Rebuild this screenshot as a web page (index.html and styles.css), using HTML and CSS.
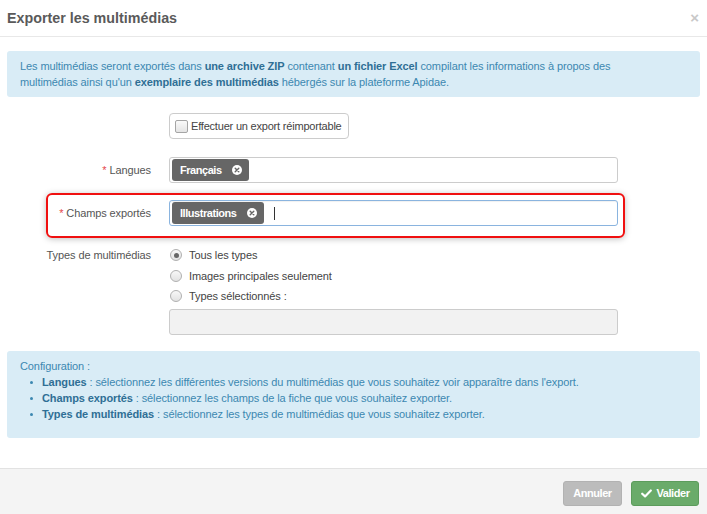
FILE: index.html
```html
<!DOCTYPE html>
<html lang="fr">
<head>
<meta charset="utf-8">
<title>Exporter les multimédias</title>
<link rel="stylesheet" href="styles.css">
</head>
<body>
<div class="modal">
  <div class="modal-header">
    <h4 class="modal-title">Exporter les multimédias</h4>
    <span class="close">×</span>
  </div>
  <div class="modal-body">
    <div class="alert">
      Les multimédias seront exportés dans <b>une archive ZIP</b> contenant <b>un fichier Excel</b> compilant les informations à propos des<br>multimédias ainsi qu'un <b>exemplaire des multimédias</b> hébergés sur la plateforme Apidae.
    </div>
    <form class="form">
      <div class="row row-check">
        <div class="label"></div>
        <label class="check-btn"><span class="checkbox"></span>Effectuer un export réimportable</label>
      </div>
      <div class="row row-lang">
        <div class="label"><span class="req">*</span> Langues</div>
        <div class="input">
          <span class="tag">Français<svg class="tag-x" viewBox="0 0 10 10" width="10" height="10"><circle cx="5" cy="5" r="5" fill="#fff"/><path d="M3.2 3.2L6.8 6.8M6.8 3.2L3.2 6.8" stroke="#666" stroke-width="1.4" stroke-linecap="round"/></svg></span>
        </div>
      </div>
      <div class="row row-fields highlight">
        <div class="label"><span class="req">*</span> Champs exportés</div>
        <div class="input focus">
          <span class="tag">Illustrations<svg class="tag-x" viewBox="0 0 10 10" width="10" height="10"><circle cx="5" cy="5" r="5" fill="#fff"/><path d="M3.2 3.2L6.8 6.8M6.8 3.2L3.2 6.8" stroke="#666" stroke-width="1.4" stroke-linecap="round"/></svg></span>
          <span class="caret"></span>
        </div>
      </div>
      <div class="row row-types">
        <div class="label label-top">Types de multimédias</div>
        <div class="radios">
          <label class="radio"><span class="radio-dot checked"></span>Tous les types</label>
          <label class="radio"><span class="radio-dot"></span>Images principales seulement</label>
          <label class="radio"><span class="radio-dot"></span>Types sélectionnés :</label>
          <div class="input disabled"></div>
        </div>
      </div>
    </form>
    <div class="alert alert-config">
      Configuration :
      <ul>
        <li><b>Langues</b> : sélectionnez les différentes versions du multimédias que vous souhaitez voir apparaître dans l'export.</li>
        <li><b>Champs exportés</b> : sélectionnez les champs de la fiche que vous souhaitez exporter.</li>
        <li><b>Types de multimédias</b> : sélectionnez les types de multimédias que vous souhaitez exporter.</li>
      </ul>
    </div>
  </div>
  <div class="modal-footer">
    <button class="btn btn-cancel" type="button">Annuler</button>
    <button class="btn btn-ok" type="button"><svg viewBox="0 0 12 10" width="11" height="9"><path d="M1.2 5.2L4.4 8.2L10.8 1.6" fill="none" stroke="#fff" stroke-width="2.4" stroke-linecap="round" stroke-linejoin="round"/></svg>Valider</button>
  </div>
</div>
</body>
</html>
```

FILE: styles.css
```css
* { box-sizing: border-box; }
html, body { margin: 0; padding: 0; }
body {
  font-family: "Liberation Sans", Arial, sans-serif;
  font-size: 11px;
  letter-spacing: -0.1px;
  color: #555;
  background: #fff;
  width: 707px;
  height: 514px;
  overflow: hidden;
}
.modal { display: flex; flex-direction: column; height: 514px; }
.modal-header {
  height: 38px;
  border-bottom: 1px solid #e8e8e8;
  display: flex;
  align-items: center;
  justify-content: space-between;
  padding: 0 8px 1px 7px;
}
.modal-title {
  margin: 0;
  font-size: 14.3px;
  font-weight: bold;
  letter-spacing: 0;
  color: #5a5a5a;
}
.close { color: #c8c8c8; font-size: 15px; font-weight: bold; line-height: 1; }
.modal-body { padding: 14px 7px 30px; flex: 1; }
.alert {
  background: #d9ecf6;
  color: #3c88b1;
  border-radius: 3px;
  padding: 7px 13px;
  line-height: 16px;
  font-size: 11px;
}
.alert b { color: #2f6f95; }
.form { margin: 16px 0 16px; }
.row {
  display: grid;
  grid-template-columns: 145px 449px;
  column-gap: 17px;
  align-items: center;
}
.label { text-align: right; padding-right: 1px; color: #555; }
.req { color: #e5474b; }
.row-check { margin-bottom: 18px; }
.row-lang { margin-bottom: 17px; }
.check-btn {
  width: 180px;
  height: 26px;
  border: 1px solid #ccc;
  border-radius: 4px;
  display: flex;
  align-items: center;
  padding-left: 5px;
  color: #444;
  white-space: nowrap;
  letter-spacing: -0.2px;
}
.checkbox {
  width: 13px; height: 13px;
  border: 1px solid #a5a5a5;
  border-radius: 2px;
  background: linear-gradient(#fafafa, #e4e4e4);
  margin-right: 3px;
}
.input {
  height: 26px;
  border: 1px solid #ccc;
  border-radius: 3px;
  display: flex;
  align-items: center;
  padding-left: 2px;
  background: #fff;
}
.input.focus { border-color: #8ab4df; box-shadow: inset 0 1px 1px rgba(0,0,0,.06); }
.input.disabled { background: #f2f2f2; margin-top: 2px; }
.tag {
  display: inline-flex;
  align-items: center;
  height: 22px;
  background: #666;
  color: #fff;
  font-weight: bold;
  font-size: 11px;
  letter-spacing: -0.45px;
  border-radius: 3px;
  padding: 0 7px 0 8px;
}
.tag-x { margin-left: 10px; }
.caret { width: 1px; height: 13px; background: #333; margin-left: 10px; }
.highlight { position: relative; }
.highlight::after {
  content: "";
  position: absolute;
  left: 39px;
  top: -7px;
  width: 575px;
  height: 41px;
  border: 2px solid #f01010;
  border-radius: 6px;
  box-shadow: 0 1px 6px rgba(0,0,0,.25);
  pointer-events: none;
}
.row-types { align-items: start; margin-top: 19px; }
.label-top { line-height: 20px; }
.radios { display: flex; flex-direction: column; }
.radio { display: flex; align-items: center; height: 20.5px; color: #444; }
.radio-dot {
  width: 12px; height: 12px;
  border: 1px solid #b0b0b0;
  border-radius: 50%;
  background: linear-gradient(#f8f8f8, #e2e2e2);
  margin: 0 7px 0 1px;
  display: flex; align-items: center; justify-content: center;
}
.radio-dot.checked::after {
  content: "";
  width: 5px; height: 5px;
  border-radius: 50%;
  background: #666;
}
.alert-config { padding: 7px 13px 16px; }
.alert-config ul { margin: 0; padding-left: 22px; }
.alert-config li { list-style: none; position: relative; }
.alert-config li::before {
  content: "";
  position: absolute;
  left: -12px; top: 7px;
  width: 3px; height: 3px;
  border-radius: 50%;
  background: #3c88b1;
}
.modal-footer {
  height: 47px;
  border-top: 1px solid #e2e2e2;
  background: #f4f4f4;
  display: flex;
  justify-content: flex-end;
  align-items: flex-start;
  padding: 12px 8px 0 0;
  gap: 9px;
}
.btn {
  height: 25px;
  border-radius: 3px;
  font-family: "Liberation Sans", Arial, sans-serif;
  font-weight: bold;
  font-size: 11px;
  letter-spacing: -0.45px;
  color: #fff;
  padding: 0;
  display: inline-flex;
  align-items: center;
  justify-content: center;
}
.btn-cancel { width: 59px; background: #bcbcbc; border: 1px solid #b2b2b2; }
.btn-ok { width: 68px; background: #6aab6a; border: 1px solid #5c9c5c; }
.btn-ok svg { margin-right: 5px; }
```
